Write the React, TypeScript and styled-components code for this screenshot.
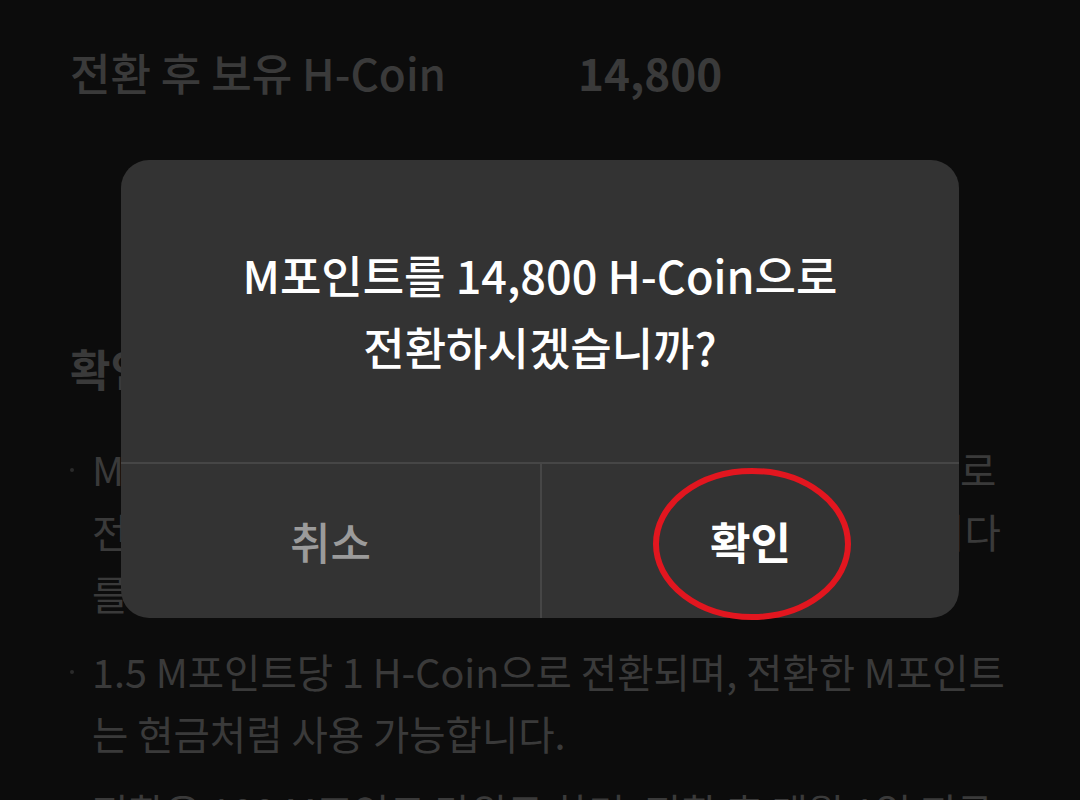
import styled, { createGlobalStyle } from "styled-components";

const GlobalStyle = createGlobalStyle`
  html, body {
    margin: 0;
    padding: 0;
    background-color: #181818;
    font-family: "Noto Sans CJK KR", "Noto Sans", sans-serif;
  }
`;

// Conversion page with the confirm dialog open on top of it.
export default function App() {
  return (
    <>
      <GlobalStyle />
      <Page>
        <SummaryRow>
          <SummaryLabel>전환 후 보유 H-Coin</SummaryLabel>
          <SummaryValue>14,800</SummaryValue>
        </SummaryRow>

        <SectionTitle>확인사항</SectionTitle>
        <NoticeList>
          <NoticeItem>
            M포인트는 보유하신 포인트의 범위 내에서, H-Coin으로
            <br />
            전환할 수 있으며, 전환 신청 이후에는 취소가 불가합니다
            <br />
            를 참고해 주세요.
          </NoticeItem>
          <NoticeItem>
            1.5 M포인트당 1 H-Coin으로 전환되며, 전환한 M포인트
            <br />
            는 현금처럼 사용 가능합니다.
          </NoticeItem>
          <NoticeItem>
            전환은 100 M포인트 단위로 하며, 전환 후 매월 1일 지급
            <br />
            됩니다.
          </NoticeItem>
        </NoticeList>
      </Page>

      <Backdrop />
      <Dialog>
        <Message>
          M포인트를 14,800 H-Coin으로
          <br />
          전환하시겠습니까?
        </Message>
        <ButtonRow>
          <DialogButton>취소</DialogButton>
          <DialogButton primary>
            확인
            <Highlight width="200" height="156" viewBox="0 0 200 156">
              <ellipse cx="100" cy="78" rx="96" ry="73" fill="none" stroke="#e2161f" strokeWidth="6" />
            </Highlight>
          </DialogButton>
        </ButtonRow>
      </Dialog>
    </>
  );
}

const Page = styled.div`
  height: 800px;
  padding: 42px 70px 0 70px;
  box-sizing: border-box;
  overflow: hidden;
`;

const SummaryRow = styled.div`
  display: grid;
  grid-template-columns: 508px auto;
  height: 60px;
  align-items: center;
`;

const SummaryLabel = styled.div`
  font-size: 44px;
  line-height: 60px;
  font-weight: 500;
  color: #747474;
`;

const SummaryValue = styled.div`
  font-size: 44px;
  line-height: 60px;
  font-weight: 700;
  color: #747474;
`;

const SectionTitle = styled.h3`
  margin: 236px 0 0 0;
  font-size: 44px;
  line-height: 60px;
  font-weight: 700;
  color: #747474;
`;

const NoticeList = styled.ul`
  list-style: none;
  margin: 40px 0 0 0;
  padding: 0;
  display: flex;
  flex-direction: column;
  gap: 16px;
`;

const NoticeItem = styled.li`
  position: relative;
  padding-left: 22px;
  font-size: 39.5px;
  line-height: 62px;
  color: #747474;
  white-space: nowrap;

  &::before {
    content: "";
    position: absolute;
    left: 0;
    top: 30px;
    width: 4px;
    height: 4px;
    border-radius: 50%;
    background-color: #555555;
  }
`;

const Backdrop = styled.div`
  position: fixed;
  inset: 0;
  background-color: rgba(0, 0, 0, 0.5);
`;

const Dialog = styled.div`
  position: fixed;
  top: 160px;
  left: 121px;
  width: 838px;
  height: 458px;
  border-radius: 28px;
  background-color: #333333;
  display: flex;
  flex-direction: column;
`;

const Message = styled.div`
  flex: 1;
  display: flex;
  align-items: center;
  justify-content: center;
  text-align: center;
  font-size: 45px;
  line-height: 72px;
  font-weight: 500;
  color: #ffffff;
  border-bottom: 2px solid #464646;
`;

const ButtonRow = styled.div`
  display: grid;
  grid-template-columns: 1fr 1fr;
  height: 154px;
`;

const DialogButton = styled.button<{ primary?: boolean }>`
  position: relative;
  border: none;
  background: transparent;
  padding: 0;
  font-family: inherit;
  font-size: 44px;
  font-weight: ${(p) => (p.primary ? 700 : 500)};
  color: ${(p) => (p.primary ? "#ffffff" : "#9b9b9b")};
  border-left: ${(p) => (p.primary ? "2px solid #464646" : "none")};
`;

const Highlight = styled.svg`
  position: absolute;
  left: 110px;
  top: 2px;
  pointer-events: none;
`;
